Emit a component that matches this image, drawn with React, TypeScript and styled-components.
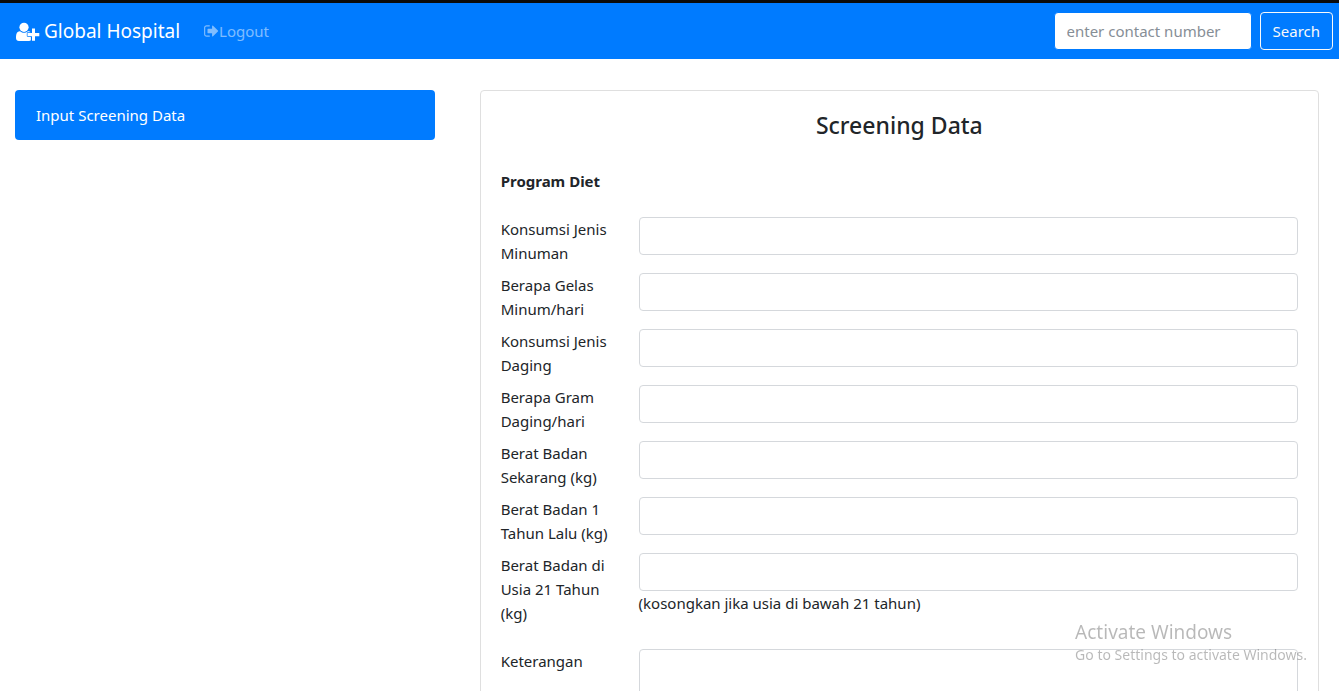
import React from "react";
import styled, { createGlobalStyle } from "styled-components";

const GlobalStyle = createGlobalStyle`
  *, *::before, *::after { box-sizing: border-box; }
  body {
    margin: 0;
    background: #fff;
    color: #212529;
    font: 400 15px/24px "Segoe UI", "Noto Sans", "Open Sans", sans-serif;
  }
  input, textarea, button { font: inherit; }
`;

const Navbar = styled.nav`
  display: flex;
  align-items: center;
  height: 59px;
  padding: 0 6px 0 16px;
  background: #007bff;
  border-top: 3px solid #0b0b0b;
`;

const Brand = styled.a`
  display: flex;
  align-items: center;
  gap: 4px;
  margin-right: 24px;
  color: #fff;
  font-size: 19px;
  line-height: 30px;
  text-decoration: none;
  white-space: nowrap;
`;

const NavLink = styled.a`
  display: flex;
  align-items: center;
  color: rgba(255, 255, 255, 0.5);
  text-decoration: none;
`;

const SearchForm = styled.form`
  display: flex;
  align-items: center;
  gap: 8px;
  margin-left: auto;
`;

const Control = styled.input`
  display: block;
  width: 100%;
  height: 38px;
  padding: 6px 12px;
  color: #495057;
  background: #fff;
  border: 1px solid #d5d8dc;
  border-radius: 4px;
  outline: 0;
`;

const SearchInput = styled(Control)`
  width: 198px;
  border-color: #007bff;
  &::placeholder { color: #868e96; opacity: 1; }
`;

const SearchButton = styled.button`
  height: 38px;
  padding: 0 12px;
  color: #f8f9fa;
  background: transparent;
  border: 1px solid #f8f9fa;
  border-radius: 4px;
  cursor: pointer;
`;

const Main = styled.main`
  display: grid;
  grid-template-columns: 1fr 2fr;
  gap: 45px;
  align-items: start;
  padding: 31px 20px 0 15px;
`;

const MenuItem = styled.a`
  display: block;
  padding: 13px 21px;
  color: #fff;
  background: #007bff;
  border-radius: 4px;
  text-decoration: none;
`;

const Card = styled.section`
  padding: 20px;
  border: 1px solid #dfdfdf;
  border-radius: 4px;
`;

const Title = styled.h4`
  margin: 0 0 28px;
  font-size: 23px;
  font-weight: 500;
  line-height: 28px;
  text-align: center;
`;

const GroupTitle = styled.h5`
  margin: 0 0 24px;
  padding-top: 2px;
  font-size: 15px;
  font-weight: 700;
  line-height: 24px;
`;

const Field = styled.div<{ $spaced?: boolean }>`
  display: flex;
  margin: 0 -15px ${(p) => (p.$spaced ? 24 : 8)}px;
`;

const Label = styled.label`
  flex: 0 0 16.6667%;
  padding: 0 15px;
`;

const FieldBody = styled.div`
  flex: 1;
  padding: 0 15px;
`;

const TextArea = styled(Control)`
  height: 62px;
  resize: none;
`;

const Watermark = styled.div`
  position: fixed;
  right: 32px;
  bottom: 25px;
  color: rgba(0, 0, 0, 0.28);
  font-size: 14px;
  line-height: 22px;
  pointer-events: none;
  white-space: nowrap;
`;

const WatermarkTitle = styled.div`
  font-size: 19px;
  line-height: 24px;
`;

const UserPlusIcon = () => (
  <svg width="24" height="20" viewBox="0 0 24 20" fill="currentColor" aria-hidden="true">
    <ellipse cx="8" cy="6.3" rx="4.6" ry="4.6" />
    <path d="M3.8 10.2c.3 0 .4.1.6.2 1.1.9 2.2 1.3 3.6 1.3s2.500-.4 3.600-1.300c.2-.1.4-.2.6-.2 1 0 1.800.3 2.400 1.100h-2.600c-.7 0-1.200.5-1.200 1.200v2.300c0 .7.500 1.200 1.200 1.200h2.900v3.300c-.5.400-1.100.7-1.900.7H3C1.200 20 0 18.900 0 17c0-3 .5-6.800 3.800-6.800z" />
    <path d="M16 7.500h3v4.500h4.300v3.200h-4.300v4.500h-3v-4.500h-4.500V12H16z" />
  </svg>
);

const SignOutIcon = () => (
  <svg width="15" height="16" viewBox="64 0 1664 1792" fill="currentColor" aria-hidden="true">
    <path d="M704 1440q0 4 1 20t.5 26.5-3 23.5-10 19.5-20.5 6.5h-320q-119 0-203.5-84.5t-84.5-203.5v-704q0-119 84.5-203.5t203.5-84.5h320q13 0 22.5 9.5t9.5 22.5q0 4 1 20t.5 26.5-3 23.5-10 19.5-20.5 6.5h-320q-66 0-113 47t-47 113v704q0 66 47 113t113 47h312l11.5 1 11.5 3 8 5.5 7 9 2 13.5zm928-544q0 26-19 45l-544 544q-19 19-45 19t-45-19-19-45v-288h-448q-26 0-45-19t-19-45v-384q0-26 19-45t45-19h448v-288q0-26 19-45t45-19 45 19l544 544q19 19 19 45z" />
  </svg>
);

const fields: { id: string; label: string; note?: string }[] = [
  { id: "minuman", label: "Konsumsi Jenis Minuman" },
  { id: "gelas", label: "Berapa Gelas Minum/hari" },
  { id: "daging", label: "Konsumsi Jenis Daging" },
  { id: "gram", label: "Berapa Gram Daging/hari" },
  { id: "berat", label: "Berat Badan Sekarang (kg)" },
  { id: "berat-lalu", label: "Berat Badan 1 Tahun Lalu (kg)" },
  { id: "berat-21", label: "Berat Badan di Usia 21 Tahun (kg)", note: "(kosongkan jika usia di bawah 21 tahun)" },
];

export default function App() {
  return (
    <>
      <GlobalStyle />
      <Navbar>
        <Brand href="#">
          <UserPlusIcon />
          Global Hospital
        </Brand>
        <NavLink href="#">
          <SignOutIcon />
          Logout
        </NavLink>
        <SearchForm>
          <SearchInput type="text" placeholder="enter contact number" aria-label="Contact number" />
          <SearchButton type="button">Search</SearchButton>
        </SearchForm>
      </Navbar>
      <Main>
        <MenuItem href="#">Input Screening Data</MenuItem>
        <Card>
          <Title>Screening Data</Title>
          <form>
            <GroupTitle>Program Diet</GroupTitle>
            {fields.map((f) => (
              <Field key={f.id} $spaced={!!f.note}>
                <Label htmlFor={f.id}>{f.label}</Label>
                <FieldBody>
                  <Control id={f.id} type="text" />
                  {f.note}
                </FieldBody>
              </Field>
            ))}
            <Field>
              <Label htmlFor="keterangan">Keterangan</Label>
              <FieldBody>
                <TextArea as="textarea" id="keterangan" />
              </FieldBody>
            </Field>
          </form>
        </Card>
      </Main>
      <Watermark>
        <WatermarkTitle>Activate Windows</WatermarkTitle>
        Go to Settings to activate Windows.
      </Watermark>
    </>
  );
}
